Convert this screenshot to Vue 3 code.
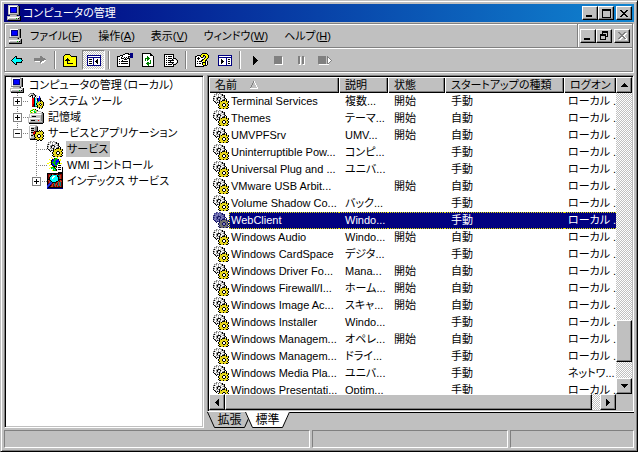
<script setup>
import { h } from 'vue'

const palette = {
  k: '#000000', w: '#ffffff', g: '#c0c0c0', d: '#808080', b: '#000080', B: '#0000ff',
  c: '#00ffff', y: '#ffff00', o: '#808000', r: '#ff0000', n: '#008000', N: '#00c000',
  m: '#800000', t: '#008080', p: '#ffffa0', e: '#e0e0e0', s: '#4060a0', R: '#c04020', Y: '#e8d820'
}
const dimmed = { ...palette, k: '#101060', w: '#8080c0', g: '#6060a0', d: '#404090', Y: '#707070', y: '#707070', o: '#505058' }

const art = {
  computer: [
    '..gggggggggg....',
    '..gwwwwwwwwddk..',
    '..gwbbbbbbbgdk..',
    '..gwbBBBBBbgdk..',
    '..gwbBBBBBbgdk..',
    '..gwbBBBBBbgdk..',
    '..gwbBBBBBbgdk..',
    '..gwbbbbbbbgdk..',
    '..gwggggggggdk..',
    '..dddddddddddk..',
    '....ggggggdk....',
    '.gggggggggggggk.',
    '.gwwwwwwwwwwwdk.',
    '.gwgggggggNgkdk.',
    '.gddddddddddddk.',
    '..kkkkkkkkkkkkk.'
  ],
  gears: [
    '...dg.dg........',
    '.dgdwdwgdk......',
    '.gwgwgwwgkdk....',
    'dkgwwdwggwgk....',
    'gwwgdkkdwgdk....',
    'kdwdkgwkgwwdk...',
    'dgwgkwgdwgdk.k..',
    'kwwdgdkgwkkkYk..',
    '.kdwgwkYkYYYYkYk',
    '..kgkdkYYYYYYYYk',
    '...k..kYYYkkYYk.',
    '.....kYYYkwwkYYk',
    '.....kYYYkwwkYYk',
    '......kYYYkkYYk.',
    '.....kYYYYYYYYYk',
    '......kkYYkYYkk.'
  ],
  tools: [
    '..dddk..........',
    '.dwggdk..w......',
    'dwgkkgdkgw......',
    '.dk.kwgkwg.B....',
    '....kgk.g..Bg...',
    '....rrkcgkBBk...',
    '....rrkcgkBBk...',
    '....rrkcwkBBkk..',
    '....rrkcgNBYkYk.',
    '....rrkcgNYYYYYk',
    '....rrkckYYYkYYk',
    '....rmkckYYkwkYk',
    '....rmkcgkYYkYYk',
    '....mmktNkYYYYk.',
    '.........kYkYYk.',
    '...........k.k..'
  ],
  storage: [
    '....yNyk........',
    '..yNNwcydk......',
    '..NwwyNcygggg...',
    '..yNywNNgwwwwgk.',
    '..ggggggggggggdk',
    '.gwwwwwwwwwwwgdk',
    '.gwggggggggggddk',
    '.gwgkkkkgggggddk',
    'gggggggggggggddk',
    'gwwwwwwwwwwwgddk',
    'gwgggggggggggddk',
    'gwgkkkkgggrggddk',
    'gwggggggggggggdk',
    'gddddddddddddddk',
    '.kkkkkkkkkkkkkk.',
    '................'
  ],
  server: [
    '..ggggggg.......',
    '.gwwwwwgdd......',
    '.gwggggddk......',
    '.gwkkkgddk......',
    '.gwggggddk......',
    '.gwkkkgddk.k.k..',
    '.gwgggmmkkkYkYk.',
    '.gwkkmrkYYYYYYYk',
    '.gwggrrkYYYYYYYk',
    '.gwggmkYYYkkYYk.',
    '.gwkkgkYYkwwkYYk',
    '.gwgggkYYkwwkYYk',
    '.gwgggdkYYkkYYk.',
    '.gddddkYYYYYYYYk',
    '..kkkkkkkYYkYYk.',
    '.........kk.kk..'
  ],
  wmi: [
    '....y.....y.....',
    '.....y.kNNy.....',
    '..y..kBNNNBk.y..',
    '...ykBBNNBBByy..',
    '....kBNNBBBBk...',
    '..yykNNNNBBNk...',
    'yy..kBNNBBNNkyy.',
    '...ykBBNNBNwwww.',
    '..y..kBBNNwkkkw.',
    '.....ykkkkwwwww.',
    '...yNNNkybwkkkwk',
    '..y.NcNNk.wwwwwk',
    '......NcNkwkkkwk',
    '.....yNNNkwwwwwk',
    '..........wwwwwk',
    '...........kkkkk'
  ],
  index: [
    'kkkkkkkkkkkkkkkk',
    'kmmmkRmkkmRkmmmk',
    'kmRtkccccckttRmk',
    'kmRkccwwcckkRRmk',
    'kmkccwwccccktRmk',
    'kmkccwcccccktRmk',
    'kkkcccccccckkkkk',
    'kRmkccccccckmRmk',
    'kmRtkcccckkRmRRk',
    'kmRBskkkkmRtRtmk',
    'kmBsBmRtmRmtRtmk',
    'kBsBmRmtRRmtRtmk',
    'BsBkmRmtRmRtRtmk',
    'sBkmRRmmRmRmmRmk',
    'Bkkkkkkkkkkkkkkk',
    'bbbbbbbbbbbbbbbb'
  ],
  back: [
    '....kk......',
    '...kck......',
    '..kcckkkkkk.',
    '.kcccccccck.',
    'kcccccccccck',
    '.kcccccccck.',
    '..kcckkkkkk.',
    '...kck......',
    '....kk......'
  ],
  forward: [
    '.......dd....',
    '.......ddd...',
    '.ddddddddddd.',
    '.dddddddddddd',
    '.ddddddddddww',
    '..wwwwwddwww.',
    '.......dwww..',
    '........w....'
  ],
  up: [
    '..kkkkk........',
    '.kyyyyyk.......',
    'kyyyyyyykkkkkk.',
    'kyyyyyyyyyyyyk.',
    'kyypkyyyyyyyyk.',
    'kyykkkyyyyyyyk.',
    'kykkkkkyyyyyyk.',
    'kyyykyyyyyyyyk.',
    'kyyykyyyyyyyyk.',
    'kyyykkkkkkyyyk.',
    'kyyyyyyyyyyyyk.',
    'kyyyyyyyyyyyyk.',
    'kkkkkkkkkkkkkk.'
  ],
  pane: [
    'bbbbbbbbbbbbbb',
    'bwwwwwwwwwwwwb',
    'bbbbbbbbbbbbbb',
    'bwwwwwbwwwwwwb',
    'bwkkkwbwwwkwwb',
    'bwwwwwbwwkkwwb',
    'bwkkkwbwkkkwwb',
    'bwwwwwbwwkkwwb',
    'bwkkkwbwwwkwwb',
    'bwwwwwbwwwwwwb',
    'bbbbbbbbbbbbbb'
  ],
  actions: [
    'bbbbbbbbbbbbbb',
    'bwwwwwwwwwwwwb',
    'bbbbbbbbbbbbbb',
    'bwwwwwwwbwwwwb',
    'bwwkwwwwbwkkwb',
    'bwwkkwwwbwwwwb',
    'bwwkkkwwbwkkwb',
    'bwwkkwwwbwwwwb',
    'bwwkwwwwbwkkwb',
    'bwwwwwwwbwwwwb',
    'bbbbbbbbbbbbbb'
  ],
  properties: [
    '........kkkk.bbb',
    '......kkwwwkkbbb',
    '...kkkwwwwwwwbbb',
    'kkkwwkwwwwwkkbbb',
    'kwwwkwwkwkwk.bbb',
    'kwwwkkkwkwkkk...',
    'kwkwwwwkkkwwk...',
    'kwwwwkwwwwwwk...',
    'kwkwkkkkkkkwk...',
    'kwwwwwwwwwwwk...',
    'kwkwkkkkkkkwk...',
    'kwwwwwwwwwwwk...',
    'kwwwwwwwwwwwk...',
    'kkkkkkkkkkkkk...'
  ],
  refresh: [
    'kkkkkkkkk...',
    'kwwwwwwwkk..',
    'kwwwwwwwkkk.',
    'kwwwwnwwwwwk',
    'kwwwwnnwwwwk',
    'kwwnnnnnwwwk',
    'kwwnwnnwwwwk',
    'kwwnwnwwnwwk',
    'kwwwwwwwnwwk',
    'kwwwwnnwnwwk',
    'kwwwnnnnnwwk',
    'kwwwwnnwwwwk',
    'kwwwwwnwwwwk',
    'kkkkkkkkkkkk'
  ],
  export: [
    'kkkkkkkkkk....',
    'kwwwwwwwwk....',
    'kwkwkkkkwk....',
    'kwwwwwwwwk....',
    'kwkwkkkkwkkk..',
    'kwwwwwwwkgwgk.',
    'kwkwkkkkkkwwgk',
    'kwwwwwkwwwwwwk',
    'kwkwkkkkkkwwgk',
    'kwwwwwwwkgwgk.',
    'kwkwkkkkwkkk..',
    'kwwwwwwwwk....',
    'kkkkkkkkkk....'
  ],
  help: [
    '.......kkkkk..',
    '......kyyyyyk.',
    '..kkkkyykkyyyk',
    'kkwwwkyyk.kyyk',
    'kwwkwwkk..kyyk',
    'kwkkkwwwwkyyk.',
    'kwwkwwwkkyyk..',
    'kwwwwwkkyykk..',
    'kwkwkkkwyykwk.',
    'kwwwwwwkkkkwk.',
    'kwkwkkwkyykwk.',
    'kwwwwwwkyykwk.',
    'kwwwwwwwkkkk..',
    'kkkkkkkkk.....'
  ],
  play: ['k....', 'kk...', 'kkk..', 'kkkk.', 'kkkkk', 'kkkk.', 'kkk..', 'kk...', 'k....'],
  stop: [
    'dddddddd.', 'ddddddddw', 'ddddddddw', 'ddddddddw', 'ddddddddw',
    'ddddddddw', 'ddddddddw', 'ddddddddw', '.wwwwwwww'
  ],
  pause: [
    'dd..dd.', 'ddw.ddw', 'ddw.ddw', 'ddw.ddw', 'ddw.ddw',
    'ddw.ddw', 'ddw.ddw', 'ddw.ddw', '.ww..ww'
  ],
  restart: [
    'dddddddd.d....', 'dddddddd.dd...', 'dddddddd.dwd..', 'dddddddd.dwwd.', 'dddddddd.dwwwd',
    'dddddddd.dwwd.', 'dddddddd.dwd..', 'dddddddd.dd...', '.wwwwwwwwww...'
  ],
  min: ['..........', '..........', '..........', '..........', '..........', '..........', '.kkkkkk...', '.kkkkkk...'],
  max: ['kkkkkkkkk', 'kkkkkkkkk', 'k.......k', 'k.......k', 'k.......k', 'k.......k', 'k.......k', 'k.......k', 'kkkkkkkkk'],
  restore: ['..kkkkkk', '..kkkkkk', '..k....k', 'kkkkkk.k', 'kkkkkk.k', 'k....kkk', 'k....k..', 'k....k..', 'kkkkkk..'],
  close: ['kk....kk', '.kk..kk.', '..kkkk..', '...kk...', '..kkkk..', '.kk..kk.', 'kk....kk'],
  closeOff: ['dd....dd.', '.dd..ddww', '..ddddww.', '...ddww..', '..ddddw..', '.ddwwddw.', 'ddww..ddw', '.ww....ww'],
  arrowUp: ['...k...', '..kkk..', '.kkkkk.', 'kkkkkkk'],
  arrowDown: ['kkkkkkk', '.kkkkk.', '..kkk..', '...k...'],
  arrowLeft: ['...k', '..kk', '.kkk', 'kkkk', '.kkk', '..kk', '...k'],
  arrowRight: ['k...', 'kk..', 'kkk.', 'kkkk', 'kkk.', 'kk..', 'k...'],
  sort: ['...dw...', '...dw...', '..d..w..', '..d..w..', '.d....w.', '.d....w.', 'd......w', 'wwwwwwww']
}

// Draws a character map as runs of one-unit-high rectangles.
function PixelIcon({ name, dim }) {
  const rows = art[name]
  const colors = dim ? dimmed : palette
  const width = Math.max(...rows.map((r) => r.length))
  const rects = []
  rows.forEach((row, y) => {
    for (let x = 0; x < row.length;) {
      let end = x + 1
      while (row[end] === row[x]) end++
      if (row[x] !== '.') rects.push(h('rect', { x, y, width: end - x, height: 1, fill: colors[row[x]] }))
      x = end
    }
  })
  return h('svg', { width, height: rows.length, viewBox: `0 0 ${width} ${rows.length}`, 'shape-rendering': 'crispEdges', 'aria-hidden': 'true' }, rects)
}
PixelIcon.props = ['name', 'dim']

const menus = [
  ['ファイル', 'F'], ['操作', 'A'], ['表示', 'V'], ['ウィンドウ', 'W'], ['ヘルプ', 'H']
]

const toolGroups = [
  [['back', '戻る'], ['forward', '進む', 'off']],
  [['up', '1 つ上のレベルへ'], ['pane', 'ツリーの表示/非表示', 'on']],
  [['properties', 'プロパティ'], ['refresh', '最新の情報に更新'], ['export', '一覧のエクスポート']],
  [['help', 'ヘルプ'], ['actions', '操作ウィンドウ']],
  [['play', 'サービスの開始'], ['stop', 'サービスの停止', 'off'], ['pause', 'サービスの一時停止', 'off'], ['restart', 'サービスの再起動', 'off']]
]

const tree = [
  { text: 'システム ツール', icon: 'tools', level: 1, box: '+' },
  { text: '記憶域', icon: 'storage', level: 1, box: '+' },
  { text: 'サービスとアプリケーション', icon: 'server', level: 1, box: '-', last: true },
  { text: 'サービス', icon: 'gears', level: 2, selected: true },
  { text: 'WMI コントロール', icon: 'wmi', level: 2 },
  { text: 'インデックス サービス', icon: 'index', level: 2, box: '+', last: true }
]

const local = 'ローカル ...'
const services = [
  ['Terminal Services', '複数...', '開始', '手動', local],
  ['Themes', 'テーマ...', '開始', '自動', local],
  ['UMVPFSrv', 'UMV...', '開始', '自動', local],
  ['Uninterruptible Pow...', 'コンピ...', '', '手動', local],
  ['Universal Plug and ...', 'ユニバ...', '', '手動', local],
  ['VMware USB Arbit...', '', '開始', '自動', local],
  ['Volume Shadow Co...', 'バック...', '', '手動', local],
  ['WebClient', 'Windo...', '', '手動', local],
  ['Windows Audio', 'Windo...', '開始', '自動', local],
  ['Windows CardSpace', 'デジタ...', '', '手動', local],
  ['Windows Driver Fo...', 'Mana...', '開始', '自動', local],
  ['Windows Firewall/I...', 'ホーム...', '開始', '自動', local],
  ['Windows Image Ac...', 'スキャ...', '開始', '自動', local],
  ['Windows Installer', 'Windo...', '', '手動', local],
  ['Windows Managem...', 'オペレ...', '開始', '自動', local],
  ['Windows Managem...', 'ドライ...', '', '手動', local],
  ['Windows Media Pla...', 'ユニバ...', '', '手動', 'ネットワ...'],
  ['Windows Presentati...', 'Optim...', '', '手動', local]
]
const selected = 'WebClient'
</script>

<template>
  <div class="window">
    <header class="title">
      <PixelIcon name="computer" />
      <h1>コンピュータの管理</h1>
      <div class="controls">
        <button aria-label="最小化"><PixelIcon name="min" /></button>
        <button aria-label="最大化"><PixelIcon name="max" /></button>
        <button class="apart" aria-label="閉じる"><PixelIcon name="close" /></button>
      </div>
    </header>

    <div class="rebar">
      <div class="menubar">
        <PixelIcon name="computer" />
        <nav>
          <button v-for="[label, key] in menus" :key="key">{{ label }}(<u>{{ key }}</u>)</button>
        </nav>
        <div class="controls child">
          <button aria-label="最小化"><PixelIcon name="min" /></button>
          <button aria-label="元に戻す"><PixelIcon name="restore" /></button>
          <button class="apart" aria-label="閉じる" disabled><PixelIcon name="closeOff" /></button>
        </div>
      </div>
      <div class="toolbar">
        <div v-for="(group, i) in toolGroups" :key="i" class="group">
          <button
            v-for="[icon, label, state] in group" :key="icon"
            :class="{ on: state === 'on' }" :disabled="state === 'off'" :aria-label="label"
          ><PixelIcon :name="icon" /></button>
        </div>
      </div>
    </div>

    <main class="work">
      <nav class="tree sunken">
        <div class="node root"><PixelIcon name="computer" /><span class="caption">コンピュータの管理（ローカル）</span></div>
        <div v-for="node in tree" :key="node.text" class="node">
          <span v-if="node.level === 2" class="indent"></span>
          <span class="branch" :class="{ last: node.last }">
            <button v-if="node.box" class="box" :class="{ plus: node.box === '+' }" :aria-label="node.text"></button>
          </span>
          <PixelIcon :name="node.icon" />
          <span class="caption" :class="{ selected: node.selected }">{{ node.text }}</span>
        </div>
      </nav>

      <section class="detail">
        <div class="list sunken">
          <div class="rows">
            <table>
              <colgroup>
                <col class="c-name"><col class="c-desc"><col class="c-state"><col class="c-start"><col>
              </colgroup>
              <thead>
                <tr>
                  <th>名前<PixelIcon name="sort" class="sort" /></th>
                  <th>説明</th>
                  <th>状態</th>
                  <th>スタートアップの種類</th>
                  <th>ログオン</th>
                </tr>
              </thead>
              <tbody>
                <tr v-for="(row, i) in services" :key="i" :class="{ selected: row[0] === selected }">
                  <td class="name">
                    <div><PixelIcon name="gears" :dim="row[0] === selected" /><span>{{ row[0] }}</span></div>
                  </td>
                  <td v-for="n in 4" :key="n">{{ row[n] }}</td>
                </tr>
              </tbody>
            </table>
          </div>
          <div class="bar vertical">
            <button aria-label="上へ"><PixelIcon name="arrowUp" /></button>
            <span class="before"></span><span class="thumb"></span><span class="after"></span>
            <button aria-label="下へ"><PixelIcon name="arrowDown" /></button>
          </div>
          <div class="bar horizontal">
            <button aria-label="左へ"><PixelIcon name="arrowLeft" /></button>
            <span class="thumb"></span><span class="after"></span>
            <button aria-label="右へ"><PixelIcon name="arrowRight" /></button>
          </div>
        </div>
        <div class="tabs">
          <button v-for="(tab, i) in ['拡張', '標準']" :key="tab" :class="{ active: i === 1 }">
            <svg viewBox="0 0 45 16" width="45" height="16" aria-hidden="true">
              <path class="face" d="M0 0 L7.5 15.5 H37.5 L45 0 Z" />
              <path class="edge" d="M0.5 0 L7.5 15.5 H37.5 L44.5 0" />
            </svg>
            <span>{{ tab }}</span>
          </button>
        </div>
      </section>
    </main>

    <footer class="status"><span></span><span></span><span></span></footer>
  </div>
</template>

<style>
body { margin: 0; background: #c0c0c0; }
</style>

<style scoped>
.window, .window * { box-sizing: border-box; }
.window {
  display: flex;
  flex-direction: column;
  height: 100vh;
  padding: 3px;
  border: 1px solid;
  border-color: #c0c0c0 #000 #000 #c0c0c0;
  box-shadow: inset 1px 1px #fff, inset -1px -1px #808080;
  background: #c0c0c0;
  color: #000;
  font: 11px/16px "Liberation Sans", "Noto Sans CJK JP", sans-serif;
  font-feature-settings: "palt";
  white-space: nowrap;
  overflow: hidden;
}
svg { display: block; flex: none; }
button {
  margin: 0;
  padding: 0;
  border: 0;
  background: none;
  color: inherit;
  font: inherit;
  font-feature-settings: inherit;
}

.title {
  display: flex;
  align-items: center;
  flex: none;
  height: 18px;
  padding: 0 2px;
  background: linear-gradient(90deg, #000080, #1084d0);
  color: #fff;
}
.title h1 { flex: 1; margin: 0 0 0 1px; font-size: 11px; font-weight: 400; line-height: 16px; }
.controls { display: flex; flex: none; }
.controls button, .bar button, .thumb {
  display: flex;
  align-items: center;
  justify-content: center;
  width: 16px;
  height: 14px;
  border: 1px solid;
  border-color: #fff #000 #000 #fff;
  background: #c0c0c0;
  box-shadow: inset -1px -1px #808080;
}
.controls .apart { margin-left: 2px; }

.rebar {
  flex: none;
  margin: 1px 1px 0 0;
  border: 1px solid #808080;
  box-shadow: 1px 1px #fff;
}
.menubar, .toolbar { display: flex; align-items: center; height: 23px; box-shadow: inset 1px 1px #fff; }
.menubar { padding-left: 2px; border-bottom: 1px solid #808080; height: 24px; }
.menubar nav { display: flex; flex: 1; gap: 16px; padding-left: 7px; }
.child {
  align-items: center;
  align-self: stretch;
  padding: 0 2px;
  border-left: 1px solid #808080;
  box-shadow: inset 1px 1px #fff;
}
.toolbar { padding-top: 1px; }
.group { display: flex; }
.group + .group::before {
  content: "";
  height: 18px;
  margin: 1px 3px;
  border-left: 1px solid #808080;
  border-right: 1px solid #fff;
}
.group button { display: flex; align-items: center; justify-content: center; width: 23px; height: 20px; }
.group .on {
  border: 1px solid;
  border-color: #808080 #fff #fff #808080;
  background: repeating-conic-gradient(#fff 0 25%, #c0c0c0 0 50%) 0 0 / 2px 2px;
}

.work { display: flex; flex: 1; gap: 3px; min-height: 0; margin-top: 3px; }
.sunken {
  border: 1px solid;
  border-color: #808080 #fff #fff #808080;
  box-shadow: inset 1px 1px #000, inset -1px -1px #c0c0c0;
  padding: 1px;
  background: #fff;
}
.tree { flex: none; width: 200px; overflow: hidden; }
.node { display: flex; align-items: center; height: 16px; padding-left: 3px; }
.indent, .branch { flex: none; width: 19px; height: 16px; }
.branch {
  padding: 4px 0 0 4px;
  background:
    repeating-linear-gradient(#808080 0 1px, transparent 1px 2px) 8px 0 / 1px 16px no-repeat,
    repeating-linear-gradient(90deg, #808080 0 1px, transparent 1px 2px) 8px 8px / 11px 1px no-repeat;
}
.branch.last {
  background:
    repeating-linear-gradient(#808080 0 1px, transparent 1px 2px) 8px 0 / 1px 8px no-repeat,
    repeating-linear-gradient(90deg, #808080 0 1px, transparent 1px 2px) 8px 8px / 11px 1px no-repeat;
}
.box {
  display: block;
  width: 9px;
  height: 9px;
  border: 1px solid #808080;
  background: linear-gradient(#000, #000) 1px 3px / 5px 1px no-repeat #fff;
}
.box.plus {
  background:
    linear-gradient(#000, #000) 1px 3px / 5px 1px no-repeat,
    linear-gradient(#000, #000) 3px 1px / 1px 5px no-repeat #fff;
}
.caption { margin-left: 3px; padding: 0 2px 0 1px; }
.caption.selected { background: #c0c0c0; }

.detail { display: flex; flex: 1; flex-direction: column; min-width: 0; }
.list {
  display: grid;
  flex: 1;
  grid-template-columns: minmax(0, 1fr) 16px;
  grid-template-rows: minmax(0, 1fr) 16px;
  min-height: 0;
  background: #c0c0c0;
}
.rows { overflow: hidden; background: #fff; }
table { width: 100%; border-collapse: separate; border-spacing: 0; table-layout: fixed; }
.c-name { width: 130px; }
.c-desc { width: 49px; }
.c-state { width: 57px; }
.c-start { width: 119px; }
th {
  height: 16px;
  padding: 0 0 0 6px;
  background: #c0c0c0;
  box-shadow: inset 1px 1px #fff, inset -1px -1px #000, inset -2px -2px #808080;
  font-weight: 400;
  line-height: 16px;
  text-align: left;
  overflow: hidden;
}
.sort { display: inline-block; margin-left: 13px; }
td { height: 17px; padding: 0 0 0 6px; line-height: 17px; }
td:last-child { padding-left: 4px; }
.name { padding: 0; }
.name div { display: flex; height: 17px; padding-left: 4px; }
.name span { flex: 1; padding-left: 2px; }
.selected td { color: #fff; background: #000080; border: dotted #e0e000; border-width: 1px 0; line-height: 15px; }
.selected td.name { background: #fff; border: 0; }
.selected .name span { background: #000080; border: 1px dotted #e0e000; border-right: 0; padding-left: 1px; }

.bar { display: flex; background: repeating-conic-gradient(#fff 0 25%, #c0c0c0 0 50%) 0 0 / 2px 2px; }
.bar button, .thumb { flex: none; width: 16px; height: 16px; }
.vertical { flex-direction: column; }
.vertical .before { flex: 229 0 0; }
.vertical .thumb { flex: 40 0 0; }
.vertical .after { flex: 16 0 0; }
.horizontal .thumb { flex: 367 0 0; }
.horizontal .after { flex: 8 0 0; }

.tabs { display: flex; flex: none; height: 16px; box-shadow: inset 0 1px #000; font-size: 12px; }
.tabs button { position: relative; width: 45px; height: 16px; }
.tabs button + button { margin-left: -7px; }
.tabs svg { position: absolute; inset: 0; }
.tabs span { position: relative; }
.face { fill: #c0c0c0; }
.active .face { fill: #fff; }
.edge { fill: none; stroke: #000; }

.status { display: grid; flex: none; grid-template-columns: 306fr 196fr 124fr; gap: 2px; height: 18px; margin-top: 2px; }
.status span { border: 1px solid; border-color: #808080 #fff #fff #808080; }
</style>
